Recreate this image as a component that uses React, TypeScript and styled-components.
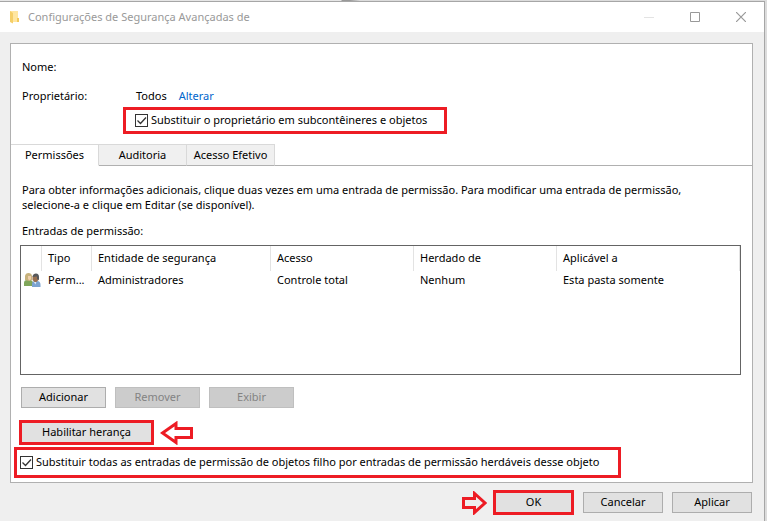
import React, { useState } from "react";
import styled, { createGlobalStyle, css } from "styled-components";

const GlobalStyle = createGlobalStyle`
  *, *::before, *::after { box-sizing: border-box; }
  body {
    margin: 0;
    background: #dcdcdc;
    color: #000;
    font-family: "Noto Sans", "Open Sans", sans-serif;
    font-size: 11px;
    line-height: 15px;
  }
  button, input { font: inherit; color: inherit; margin: 0; }
`;

const red = "#ed1c24";

const Desktop = styled.div`
  min-height: 100vh;
  display: flex;
  padding: 1px 2px 0 0;
  background: linear-gradient(90deg, #e6e6e6 341px, #999 342px, #999 350px, #dcdcdc 360px);
`;

const Dialog = styled.section`
  flex: 1;
  min-width: 0;
  border: solid #a6a6a6;
  border-width: 1px 1px 0 0;
  background: #efefef;
`;

const TitleBar = styled.header`
  display: flex;
  align-items: center;
  height: 30px;
  padding-left: 9px;
  background: #fff;
  color: #999;
`;

const Title = styled.h1`
  flex: 1;
  margin: 0 0 2px 8px;
  font-size: 11px;
  font-weight: 400;
`;

const CaptionButton = styled.button`
  width: 46px;
  height: 30px;
  padding: 0;
  border: 0;
  background: none;
  display: grid;
  place-items: center;
`;

const Panel = styled.main`
  margin: 11px 11px 0 10px;
  padding-bottom: 4px;
  border: 1px solid #b0b0b0;
  background: #fff;
`;

const Owner = styled.dl`
  display: grid;
  grid-template-columns: 112px 1fr;
  row-gap: 14px;
  margin: 0;
  padding: 15px 11px 0;
`;

const Term = styled.dt`
  margin: 0;
`;

const Detail = styled.dd`
  display: flex;
  gap: 12px;
  margin: 0 0 0 2px;
`;

const Link = styled.a`
  color: #0066cc;
  text-decoration: none;
`;

const Highlight = styled.div`
  display: flex;
  align-items: center;
  width: fit-content;
  border: 3px solid ${red};
`;

const OwnerHighlight = styled(Highlight)`
  height: 27px;
  margin: 4px 0 10px 112px;
  padding: 0 17px 0 9px;
`;

const InheritHighlight = styled(Highlight)`
  height: 31px;
  margin: 2px 0 0 3px;
  padding: 0 19px 0 3px;
`;

const CheckLabel = styled.label`
  display: flex;
  align-items: center;
  gap: 3px;
`;

const CheckText = styled.span`
  padding-bottom: 2px;
`;

const CheckBox = styled.span`
  display: grid;
  width: 13px;
  height: 13px;
  & > * { grid-area: 1 / 1; }
  svg { pointer-events: none; visibility: hidden; }
  input:checked + svg { visibility: visible; }
`;

const CheckInput = styled.input`
  appearance: none;
  width: 13px;
  height: 13px;
  border: 1px solid #333;
  background: #fff;
`;

const TabList = styled.div`
  display: flex;
  &::after {
    content: "";
    flex: 1;
    border-bottom: 1px solid #b0b0b0;
  }
`;

const Tab = styled.button<{ $active: boolean }>`
  width: 88px;
  height: 22px;
  padding: 0 0 2px;
  border: 1px solid #d9d9d9;
  border-left-width: 0;
  border-bottom-color: #b0b0b0;
  background: #f0f0f0;
  ${(p) => p.$active && css`
    border-bottom-color: #fff;
    background: #fff;
  `}
`;

const Body = styled.div`
  padding: 16px 11px 0 9px;
`;

const Hint = styled.p`
  max-width: 690px;
  margin: 0 0 11px 2px;
`;

const ListCaption = styled.div`
  margin-left: 2px;
`;

const ListFrame = styled.div`
  height: 130px;
  margin: 7px 0 12px;
  border: 1px solid #646464;
`;

const Table = styled.table`
  width: 100%;
  table-layout: fixed;
  border-collapse: collapse;
`;

const Col = styled.col<{ $w?: number }>`
  width: ${(p) => (p.$w ? p.$w + "px" : "auto")};
`;

const HeadCell = styled.th`
  height: 25px;
  padding: 0 0 2px 6px;
  font-weight: 400;
  text-align: left;
  background: linear-gradient(#e3e3e3, #e3e3e3) right / 1px 100% no-repeat;
`;

const Cell = styled.td`
  height: 19px;
  padding: 0 0 2px 6px;
  white-space: nowrap;
`;

const IconCell = styled(Cell)`
  padding: 0 0 2px 3px;
  svg { display: block; }
`;

const ButtonRow = styled.div`
  display: flex;
  gap: 9px;
  padding-left: 1px;
`;

const Button = styled.button<{ $w: number; $marked?: boolean }>`
  width: ${(p) => p.$w}px;
  height: 21px;
  padding: 0 0 2px;
  border: 1px solid #adadad;
  background: #e1e1e1;
  &:disabled {
    border-color: #bfbfbf;
    background: #ccc;
    color: #838383;
  }
  ${(p) => p.$marked && css`
    height: auto;
    padding: 1px 0 3px;
    border: 3px solid ${red};
  `}
`;

const InheritRow = styled.div`
  display: flex;
  align-items: center;
  gap: 6px;
  margin: 12px 0 0 8px;
`;

const Footer = styled.footer`
  display: flex;
  align-items: center;
  justify-content: flex-end;
  gap: 9px;
  padding: 7px 12px 8px;
`;

const MarkedAction = styled.div`
  display: flex;
  align-items: center;
  gap: 6px;
`;

function Check({ children }: { children: React.ReactNode }) {
  const [on, setOn] = useState(true);
  return (
    <CheckLabel>
      <CheckBox>
        <CheckInput type="checkbox" checked={on} onChange={() => setOn(!on)} />
        <svg width="13" height="13" viewBox="0 0 13 13" fill="none" stroke="#333" strokeWidth="1.3">
          <path d="M2.5 6.5l3 3 5.5-6" />
        </svg>
      </CheckBox>
      <CheckText>{children}</CheckText>
    </CheckLabel>
  );
}

const FolderIcon = () => (
  <svg width="11" height="14" viewBox="0 0 11 14">
    <path d="M1 1h8v7h1v4H2z" fill="#ffe6a0" />
    <path d="M8 8h2v4H8z" fill="#f3c95c" />
    <path d="M1 1l3 2v10.5L1 12z" fill="#f5cf68" />
  </svg>
);

const UsersIcon = () => (
  <svg width="17" height="14" viewBox="0 0 17 14">
    <path d="M0 13V10Q0 7 3 7h4l2 2v4z" fill="#7fa65a" />
    <path d="M1 7V3Q1.500 0 4.500 0T8 3v4L5 8z" fill="#c8b27c" />
    <path d="M4 3h3v3L5.500 7.500 4 6z" fill="#f0d0ac" />
    <path d="M8 14v-3q0-3 3-3h2q3.500 0 3.500 4v2z" fill="#7ba3d0" />
    <path d="M9.500 8.500h3l-1 3z" fill="#dbe8f4" />
    <path d="M8.500 4Q9 1 11.500 1t3 3v3l-2 2h-2L8.500 7z" fill="#9a7050" />
    <path d="M8.500 4Q9 .500 12 .500T15 4v3l-2-1V3.500z" fill="#56585c" />
  </svg>
);

const LeftArrow = () => (
  <svg width="34" height="24" viewBox="0 0 34 24" fill="none" stroke={red} strokeWidth="3">
    <path d="M2.500 12L16 2.500V7.500H31.500V16.500H16V21.500z" />
  </svg>
);

const RightArrow = () => (
  <svg width="26" height="24" viewBox="0 0 26 24" fill="none" stroke={red} strokeWidth="3">
    <path d="M2.500 7.500H13.500V2.500L24 12L13.500 21.500V16.500H2.500z" />
  </svg>
);

const headers = ["Tipo", "Entidade de segurança", "Acesso", "Herdado de", "Aplicável a"];
const entry = ["Perm...", "Administradores", "Controle total", "Nenhum", "Esta pasta somente"];
const tabs = ["Permissões", "Auditoria", "Acesso Efetivo"];

export default function App() {
  const [tab, setTab] = useState(0);
  return (
    <Desktop>
      <GlobalStyle />
      <Dialog>
        <TitleBar>
          <FolderIcon />
          <Title>Configurações de Segurança Avançadas de</Title>
          <CaptionButton aria-label="Minimizar" disabled>
            <svg width="10" height="10" stroke="#e3e3e3"><path d="M0 5.500h10" /></svg>
          </CaptionButton>
          <CaptionButton aria-label="Maximizar">
            <svg width="10" height="10" fill="none" stroke="#999"><path d="M.500 .500h9v9h-9z" /></svg>
          </CaptionButton>
          <CaptionButton aria-label="Fechar">
            <svg width="10" height="10" stroke="#999" strokeWidth="1.200"><path d="M0 0l10 10M10 0L0 10" /></svg>
          </CaptionButton>
        </TitleBar>
        <Panel>
          <Owner>
            <Term>Nome:</Term>
            <Detail />
            <Term>Proprietário:</Term>
            <Detail>
              Todos <Link href="#alterar">Alterar</Link>
            </Detail>
          </Owner>
          <OwnerHighlight>
            <Check>Substituir o proprietário em subcontêineres e objetos</Check>
          </OwnerHighlight>
          <TabList role="tablist">
            {tabs.map((name, i) => (
              <Tab key={name} role="tab" aria-selected={i === tab} $active={i === tab} onClick={() => setTab(i)}>
                {name}
              </Tab>
            ))}
          </TabList>
          <Body>
            <Hint>
              Para obter informações adicionais, clique duas vezes em uma entrada de permissão. Para modificar uma
              entrada de permissão, selecione-a e clique em Editar (se disponível).
            </Hint>
            <ListCaption id="entries">Entradas de permissão:</ListCaption>
            <ListFrame>
              <Table aria-labelledby="entries">
                <colgroup>
                  <Col $w={21} /><Col $w={50} /><Col $w={179} /><Col $w={143} /><Col $w={143} /><Col />
                </colgroup>
                <thead>
                  <tr>
                    <HeadCell />
                    {headers.map((h) => <HeadCell key={h}>{h}</HeadCell>)}
                  </tr>
                </thead>
                <tbody>
                  <tr>
                    <IconCell><UsersIcon /></IconCell>
                    {entry.map((c) => <Cell key={c}>{c}</Cell>)}
                  </tr>
                </tbody>
              </Table>
            </ListFrame>
            <ButtonRow>
              <Button $w={85}>Adicionar</Button>
              <Button $w={85} disabled>Remover</Button>
              <Button $w={85} disabled>Exibir</Button>
            </ButtonRow>
          </Body>
          <InheritRow>
            <Button $w={135} $marked>Habilitar herança</Button>
            <LeftArrow />
          </InheritRow>
          <InheritHighlight>
            <Check>
              Substituir todas as entradas de permissão de objetos filho por entradas de permissão herdáveis desse objeto
            </Check>
          </InheritHighlight>
        </Panel>
        <Footer>
          <MarkedAction>
            <RightArrow />
            <Button $w={81} $marked>OK</Button>
          </MarkedAction>
          <Button $w={80}>Cancelar</Button>
          <Button $w={80}>Aplicar</Button>
        </Footer>
      </Dialog>
    </Desktop>
  );
}
